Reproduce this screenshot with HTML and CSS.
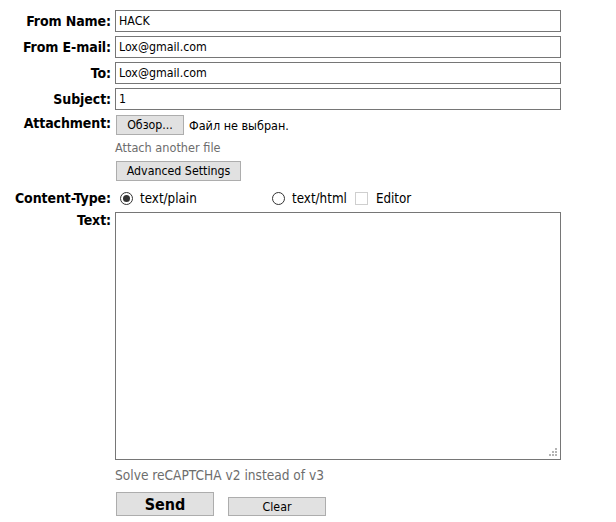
FILE: index.html
```html
<!DOCTYPE html>
<html>
<head>
<meta charset="utf-8">
<link rel="stylesheet" href="styles.css">
</head>
<body>
<form class="form">
  <label class="lbl mid">From Name:</label>
  <input class="field" type="text" value="HACK">
  <label class="lbl mid">From E-mail:</label>
  <input class="field" type="text" value="Lox@gmail.com">
  <label class="lbl mid">To:</label>
  <input class="field" type="text" value="Lox@gmail.com">
  <label class="lbl mid">Subject:</label>
  <input class="field" type="text" value="1">

  <label class="lbl attach-lbl">Attachment:</label>
  <div class="attach">
    <div class="file-row">
      <button type="button" class="btn browse">Обзор...</button>
      <span class="file-none">Файл не выбран.</span>
    </div>
    <div class="hint attach-hint">Attach another file</div>
    <button type="button" class="btn adv">Advanced Settings</button>
  </div>

  <label class="lbl ct-lbl">Content-Type:</label>
  <div class="ct">
    <label class="opt plain"><span class="radio on"></span>text/plain</label>
    <label class="opt"><span class="radio"></span>text/html</label>
    <label class="opt editor"><span class="check"></span>Editor</label>
  </div>

  <label class="lbl text-lbl">Text:</label>
  <div class="area-wrap">
    <textarea class="area"></textarea>
    <svg class="grip" width="9" height="9" viewBox="0 0 9 9">
      <rect x="6" y="0" width="2" height="2" fill="#b4b4b4"/>
      <rect x="3" y="3" width="2" height="2" fill="#b4b4b4"/>
      <rect x="6" y="3" width="2" height="2" fill="#b4b4b4"/>
      <rect x="0" y="6" width="2" height="2" fill="#b4b4b4"/>
      <rect x="3" y="6" width="2" height="2" fill="#b4b4b4"/>
      <rect x="6" y="6" width="2" height="2" fill="#b4b4b4"/>
    </svg>
  </div>

  <div></div>
  <div class="hint captcha">Solve reCAPTCHA v2 instead of v3</div>

  <div></div>
  <div class="actions">
    <button type="button" class="btn send">Send</button>
    <button type="button" class="btn clear">Clear</button>
  </div>
</form>
</body>
</html>
```

FILE: styles.css
```css
html, body {
  margin: 0;
  padding: 0;
  background: #fff;
}
body {
  font-family: "DejaVu Sans Condensed", "DejaVu Sans", sans-serif;
  font-size: 12px;
  color: #000;
}
.form {
  display: grid;
  grid-template-columns: 111px 446px;
  column-gap: 4px;
  row-gap: 4px;
  padding-top: 10px;
  align-items: start;
}
.lbl {
  font-weight: bold;
  font-size: 14px;
  text-align: right;
  line-height: 16px;
  letter-spacing: -0.1px;
}
.lbl.mid {
  line-height: 22px;
}
.field {
  box-sizing: border-box;
  height: 22px;
  width: 446px;
  margin: 0;
  border: 1px solid #767676;
  padding: 0 3px;
  font-family: inherit;
  font-size: 12.3px;
  color: #000;
  outline: none;
}
.attach-lbl {
  line-height: 18px;
}
.attach {
  display: flex;
  flex-direction: column;
  align-items: flex-start;
}
.file-row {
  display: flex;
  align-items: center;
  margin-top: 1px;
}
.btn {
  box-sizing: border-box;
  background: #e1e1e1;
  border: 1px solid #adadad;
  font-family: inherit;
  font-size: 12.3px;
  color: #000;
  margin: 0;
  padding: 0;
  border-radius: 0;
}
.browse {
  height: 20px;
  width: 68px;
  margin-left: 1px;
}
.file-none {
  margin-left: 5px;
  font-size: 12.5px;
}
.hint {
  color: #6d6d6d;
  font-size: 12.6px;
  line-height: 16px;
}
.attach-hint {
  margin-top: 5px;
}
.adv {
  margin-top: 5px;
  margin-left: 1px;
  height: 20px;
  width: 125px;
}
.ct-lbl {
  line-height: 20px;
  padding-top: 3px;
}
.ct {
  height: 23px;
  box-sizing: border-box;
  padding-top: 3px;
  display: flex;
  align-items: center;
  font-size: 13.3px;
}
.opt {
  display: flex;
  align-items: center;
  height: 20px;
}
.plain {
  width: 152px;
  margin-left: 5px;
}
.radio {
  box-sizing: border-box;
  width: 13px;
  height: 13px;
  border: 1px solid #333;
  border-radius: 50%;
  margin-right: 7px;
  position: relative;
}
.radio.on::after {
  content: "";
  position: absolute;
  left: 2px;
  top: 2px;
  width: 7px;
  height: 7px;
  border-radius: 50%;
  background: #333;
}
.editor {
  margin-left: 8px;
}
.check {
  box-sizing: border-box;
  width: 13px;
  height: 13px;
  border: 1px solid #cfcfcf;
  margin-right: 8px;
}
.text-lbl {
  line-height: 16px;
}
.area-wrap {
  position: relative;
  width: 446px;
  height: 248px;
}
.area {
  display: block;
  box-sizing: border-box;
  width: 446px;
  height: 248px;
  margin: 0;
  border: 1px solid #767676;
  font-family: inherit;
  font-size: 12px;
  resize: none;
  outline: none;
}
.grip {
  position: absolute;
  right: 3px;
  bottom: 3px;
}
.captcha {
  line-height: 18px;
  font-size: 13.6px;
  padding-top: 2px;
}
.actions {
  display: flex;
  align-items: flex-end;
  margin-top: 4px;
}
.send {
  width: 98px;
  height: 24px;
  margin-left: 1px;
  font-weight: bold;
  font-size: 16px;
}
.clear {
  width: 98px;
  height: 19px;
  margin-left: 14px;
  font-size: 12.3px;
}
```
